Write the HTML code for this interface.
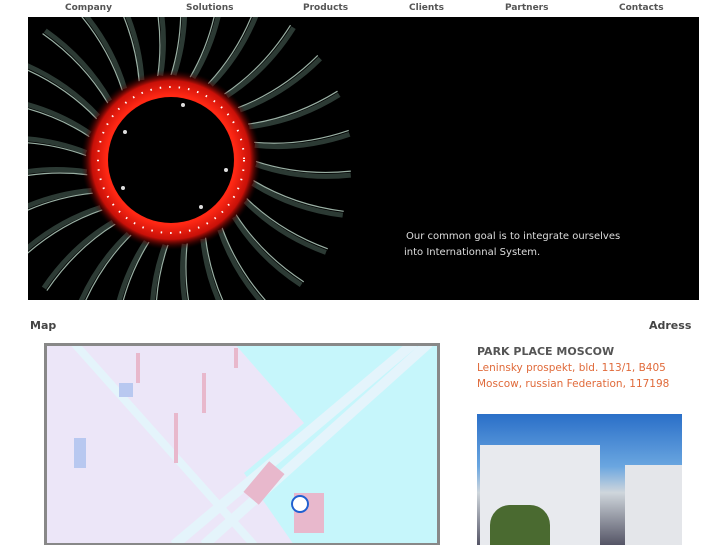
<!DOCTYPE html>
<html><head><meta charset="utf-8"><style>
body{margin:0;background:#fff;width:727px;height:545px;overflow:hidden;position:relative;font-family:"DejaVu Sans","Liberation Sans",sans-serif}
.nav{position:absolute;top:3px;font-size:9px;font-weight:bold;color:#555}
.ab{position:absolute}
</style></head><body>
<div class="nav" style="left:65px">Company</div>
<div class="nav" style="left:186px">Solutions</div>
<div class="nav" style="left:303px">Products</div>
<div class="nav" style="left:409px">Clients</div>
<div class="nav" style="left:505px">Partners</div>
<div class="nav" style="left:619px">Contacts</div>
<svg class="ab" style="left:28px;top:17px" width="671" height="283" viewBox="0 0 671 283">
<defs><radialGradient id="r" cx="0.5" cy="0.5" r="0.5"><stop offset="0.72" stop-color="#ff2814"/><stop offset="0.88" stop-color="#c81008"/><stop offset="1" stop-color="#300000" stop-opacity="0"/></radialGradient></defs>
<rect width="671" height="283" fill="#000"/>
<g transform="translate(143,143)" fill="none">
<g id="b"><path d="M3,-85 Q18,-130 12,-180" stroke="#2c3a34" stroke-width="5"/><path d="M0,-85 Q14,-130 8,-180" stroke="#9ab0a4" stroke-width="1.2"/></g>
<use href="#b" transform="rotate(13)"/><use href="#b" transform="rotate(26)"/><use href="#b" transform="rotate(39)"/><use href="#b" transform="rotate(52)"/><use href="#b" transform="rotate(65)"/><use href="#b" transform="rotate(78)"/><use href="#b" transform="rotate(91)"/><use href="#b" transform="rotate(104)"/><use href="#b" transform="rotate(117)"/><use href="#b" transform="rotate(130)"/><use href="#b" transform="rotate(143)"/><use href="#b" transform="rotate(156)"/><use href="#b" transform="rotate(169)"/><use href="#b" transform="rotate(182)"/><use href="#b" transform="rotate(195)"/><use href="#b" transform="rotate(208)"/><use href="#b" transform="rotate(221)"/><use href="#b" transform="rotate(234)"/><use href="#b" transform="rotate(247)"/><use href="#b" transform="rotate(260)"/><use href="#b" transform="rotate(273)"/><use href="#b" transform="rotate(286)"/><use href="#b" transform="rotate(299)"/><use href="#b" transform="rotate(312)"/><use href="#b" transform="rotate(325)"/><use href="#b" transform="rotate(338)"/><use href="#b" transform="rotate(351)"/>
<circle r="90" fill="url(#r)"/>
<circle r="73" fill="none" stroke="#fff" stroke-width="2" stroke-dasharray="1.5 8"/>
<circle r="63" fill="#000"/>
<g fill="#ddd"><circle cx="12" cy="-55" r="2"/><circle cx="-46" cy="-28" r="2"/><circle cx="-48" cy="28" r="2"/><circle cx="30" cy="47" r="2"/><circle cx="55" cy="10" r="2"/></g>
</g>
<text x="378" y="222" fill="#ddd" font-size="10" font-family="DejaVu Sans,sans-serif">Our common goal is to integrate ourselves</text>
<text x="376" y="238" fill="#ddd" font-size="10" font-family="DejaVu Sans,sans-serif">into Internationnal System.</text>
</svg>
<div class="ab" style="left:30px;top:319px;font-size:11px;font-weight:bold;color:#444">Map</div>
<div class="ab" style="left:649px;top:319px;font-size:11px;font-weight:bold;color:#444">Adress</div>
<svg class="ab" style="left:44px;top:343px" width="396" height="202">
<rect width="396" height="202" fill="#ece6f8"/>
<path d="M190,0 L396,0 L396,202 L250,202 L200,130 L260,80 Z" fill="#c6f6fb"/>
<path d="M130,202 L370,0 M160,202 L385,0" stroke="#e4f4fb" stroke-width="10"/>
<path d="M30,0 L210,202" stroke="#e4f4fb" stroke-width="8"/>
<g fill="#e8b8cc"><rect x="92" y="10" width="4" height="30"/><rect x="130" y="70" width="4" height="50"/><rect x="158" y="30" width="4" height="40"/><rect x="190" y="5" width="4" height="20"/><rect x="210" y="120" width="20" height="40" transform="rotate(40 220 140)"/><rect x="250" y="150" width="30" height="40"/><rect x="30" y="95" width="12" height="30" fill="#b8c8f0"/><rect x="75" y="40" width="14" height="14" fill="#b8c8f0"/></g>
<rect x="1.5" y="1.5" width="393" height="200" fill="none" stroke="#888" stroke-width="3"/>
<circle cx="256" cy="161" r="8" fill="#fff" stroke="#2060d0" stroke-width="2"/>
</svg>
<div class="ab" style="left:477px;top:345px;font-size:11px;font-weight:bold;color:#555">PARK PLACE MOSCOW</div>
<div class="ab" style="left:477px;top:361px;font-size:10.5px;color:#e06a3a;line-height:15.5px">Leninsky prospekt, bld. 113/1, B405<br>Moscow, russian Federation, 117198</div>
<div class="ab" style="left:477px;top:414px;width:205px;height:131px;background:linear-gradient(#2a6fc8,#6aa6e0 40%,#cfd6dc 60%,#556 100%)"></div>
<div class="ab" style="left:480px;top:445px;width:120px;height:100px;background:#e8eaee"></div>
<div class="ab" style="left:625px;top:465px;width:57px;height:80px;background:#e4e6ea"></div>
<div class="ab" style="left:490px;top:505px;width:60px;height:40px;background:#4a6a30;border-radius:20px 20px 0 0"></div>
</body></html>
